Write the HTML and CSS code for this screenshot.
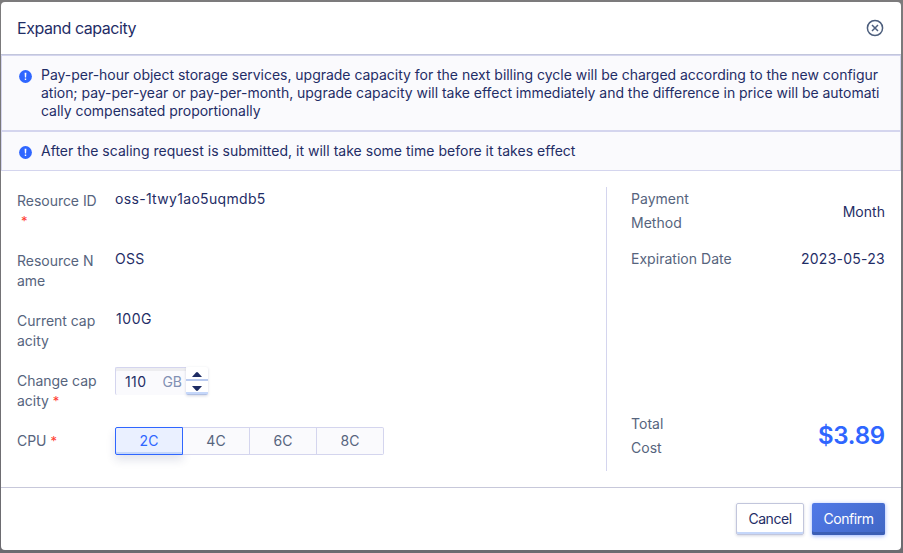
FILE: index.html
```html
<!DOCTYPE html>
<html lang="en">
<head>
<meta charset="utf-8">
<title>Expand capacity</title>
<link rel="stylesheet" href="styles.css">
</head>
<body>
<div class="dialog">
  <header class="header">
    <h1 class="title">Expand capacity</h1>
    <svg class="close" width="18" height="18" viewBox="0 0 18 18" fill="none" stroke="#4d5f7d" stroke-width="1.5"><circle cx="9" cy="9" r="7.6"/><path d="M6 6l6 6M12 6l-6 6"/></svg>
  </header>
  <div class="alert alert-long">
    <svg class="info" width="13" height="13" viewBox="0 0 13 13"><circle cx="6.5" cy="6.5" r="6.4" fill="#2f66ff"/><path d="M5.6 2.7h1.8L7.1 7.6H5.9zM5.8 8.6h1.4v1.5H5.8z" fill="#fff"/></svg>
    <p class="alert-text">Pay-per-hour object storage services, upgrade capacity for the next billing cycle will be charged according to the new configur<br>ation; pay-per-year or pay-per-month, upgrade capacity will take effect immediately and the difference in price will be automati<br>cally compensated proportionally</p>
  </div>
  <div class="alert">
    <svg class="info" width="13" height="13" viewBox="0 0 13 13"><circle cx="6.5" cy="6.5" r="6.4" fill="#2f66ff"/><path d="M5.6 2.7h1.8L7.1 7.6H5.9zM5.8 8.6h1.4v1.5H5.8z" fill="#fff"/></svg>
    <p class="alert-text">After the scaling request is submitted, it will take some time before it takes effect</p>
  </div>
  <main class="content">
    <div class="form">
      <div class="row"><div class="label">Resource ID<br><span class="star">*</span></div><div class="value">oss-1twy1ao5uqmdb5</div></div>
      <div class="row"><div class="label">Resource N<br>ame</div><div class="value">OSS</div></div>
      <div class="row"><div class="label">Current cap<br>acity</div><div class="value amount">100G</div></div>
      <div class="row"><div class="label">Change cap<br>acity<span class="star">*</span></div>
        <div class="number">
          <div class="field"><span class="digits">110</span><span class="unit">GB</span></div>
          <div class="stepper">
            <div class="step"><svg width="10" height="5" viewBox="0 0 10 5"><path d="M0 5L4 .5Q5-.3 6 .5L10 5z" fill="#1d2b63"/></svg></div>
            <div class="step step-down"><svg width="10" height="5" viewBox="0 0 10 5"><path d="M0 0L4 4.5Q5 5.3 6 4.5L10 0z" fill="#1d2b63"/></svg></div>
          </div>
        </div>
      </div>
      <div class="row"><div class="label">CPU<span class="star">*</span></div>
        <div class="segments"><div class="segment selected">2C</div><div class="segment">4C</div><div class="segment">6C</div><div class="segment">8C</div></div>
      </div>
    </div>
    <aside class="summary">
      <div class="item"><span class="item-label">Payment<br>Method</span><span class="item-value">Month</span></div>
      <div class="item"><span class="item-label">Expiration Date</span><span class="item-value date">2023-05-23</span></div>
      <div class="item total"><span class="item-label">Total<br>Cost</span><span class="price">$3.89</span></div>
    </aside>
  </main>
  <footer class="footer">
    <div class="button">Cancel</div>
    <div class="button primary">Confirm</div>
  </footer>
</div>
</body>
</html>
```
FILE: styles.css
```css
* { box-sizing: border-box; }
body {
  margin: 0;
  height: 553px;
  padding: 2px 2px 3px 1px;
  background: linear-gradient(#7c7b7c, #6c6b70);
  font: 14px/20px Inter, "Liberation Sans", sans-serif;
  color: #1f2d66;
  white-space: nowrap;
  overflow: hidden;
}
.dialog {
  display: flex;
  flex-direction: column;
  height: 548px;
  background: #fff;
  border-radius: 4px;
}
.header {
  display: flex;
  justify-content: space-between;
  align-items: center;
  height: 53px;
  padding: 0 17px 0 16px;
  border-bottom: 1px solid #c2c6dc;
}
.title { margin: 0; font-size: 16px; font-weight: 400; letter-spacing: -.45px; }
.close { display: block; }
.alert {
  display: flex;
  height: 40px;
  padding: 10px 0 0 17px;
  gap: 9px;
  border: 1px solid #d4d5ee;
  background: #fafafd;
  line-height: 18px;
}
.alert-long { height: 76px; }
.info { flex: none; margin-top: 4px; }
.alert-text { margin: 0; letter-spacing: .02px; }
.alert-long .alert-text { letter-spacing: -.025px; }
.content { display: flex; height: 316px; padding: 16px 16px 16px; }
.form { width: 589px; padding-top: 4px; }
.row { display: flex; height: 60px; }
.label { width: 98px; color: #56647d; letter-spacing: -.03px; }
.star { margin-left: 4px; color: #ff3b30; font-size: 13px; }
.value { margin-top: -2px; letter-spacing: .32px; }
.amount { padding-left: 1px; letter-spacing: .55px; }
.number { display: flex; margin-top: -4px; height: 28px; }
.field {
  display: flex;
  justify-content: space-between;
  width: 71px;
  padding: 4px 4px 0 9px;
  border: solid #d4d5ee;
  border-width: 1px 0 0 1px;
  border-radius: 2px 0 0 2px;
  background: #fafafd;
  box-shadow: inset 0 3px #ededf0;
}
.digits { letter-spacing: .4px; }
.unit { color: #8190b3; }
.stepper {
  width: 22px;
  border-radius: 2px;
  border-bottom: 1px solid #b1c0e2;
  box-shadow: 0 1px 3px #1f2d6630;
}
.step { display: flex; justify-content: center; height: 14px; padding-top: 5px; border-bottom: 2px solid #b9caef; }
.step-down { height: 13px; padding-top: 5px; border-color: #c5d7fa; }
.segments { display: flex; margin-top: -4px; height: 28px; }
.segment {
  width: 67px;
  border: 1px solid #d4d5ee;
  border-left: 0;
  background: #fafafd;
  color: #56647d;
  line-height: 26px;
  text-align: center;
}
.segment:last-child { border-radius: 0 2px 2px 0; }
.segment.selected {
  width: 68px;
  border: 1px solid #2f66ff;
  border-radius: 2px 0 0 2px;
  background: #eaf0ff;
  color: #2f66ff;
  box-shadow: inset 0 -2px #c5d7fa, 0 5px 10px #1f2d6622;
}
.summary {
  display: flex;
  flex-direction: column;
  gap: 12px;
  flex: 1;
  padding-left: 24px;
  border-left: 1px solid #d4d5ee;
}
.item { display: flex; justify-content: space-between; align-items: center; line-height: 24px; letter-spacing: .03px; }
.item-label { color: #56647d; }
.item-value { padding-top: 1px; margin-bottom: -1px; }
.date { padding-top: 0; margin-bottom: 0; letter-spacing: .25px; }
.total { margin-top: auto; margin-bottom: 11px; }
.price { color: #2f66ff; font-size: 24px; font-weight: 600; letter-spacing: -.2px; }
.footer {
  display: flex;
  justify-content: flex-end;
  gap: 8px;
  height: 63px;
  padding: 15px 16px 0;
  border-top: 1px solid #c7c8da;
}
.button {
  width: 68px;
  height: 32px;
  border: 1px solid #c2c6dc;
  border-radius: 2px;
  line-height: 30px;
  letter-spacing: -.45px;
  text-align: center;
  box-shadow: inset 0 -2px #c5d7fa, 0 1px 3px #1f2d6630;
}
.primary {
  width: 73px;
  border: 0;
  line-height: 32px;
  color: #fff;
  background: linear-gradient(135deg, #5079e8, #4167c5);
  box-shadow: inset 0 -3px #3b5eb5, 0 1px 4px #2f66ff80;
}
```
